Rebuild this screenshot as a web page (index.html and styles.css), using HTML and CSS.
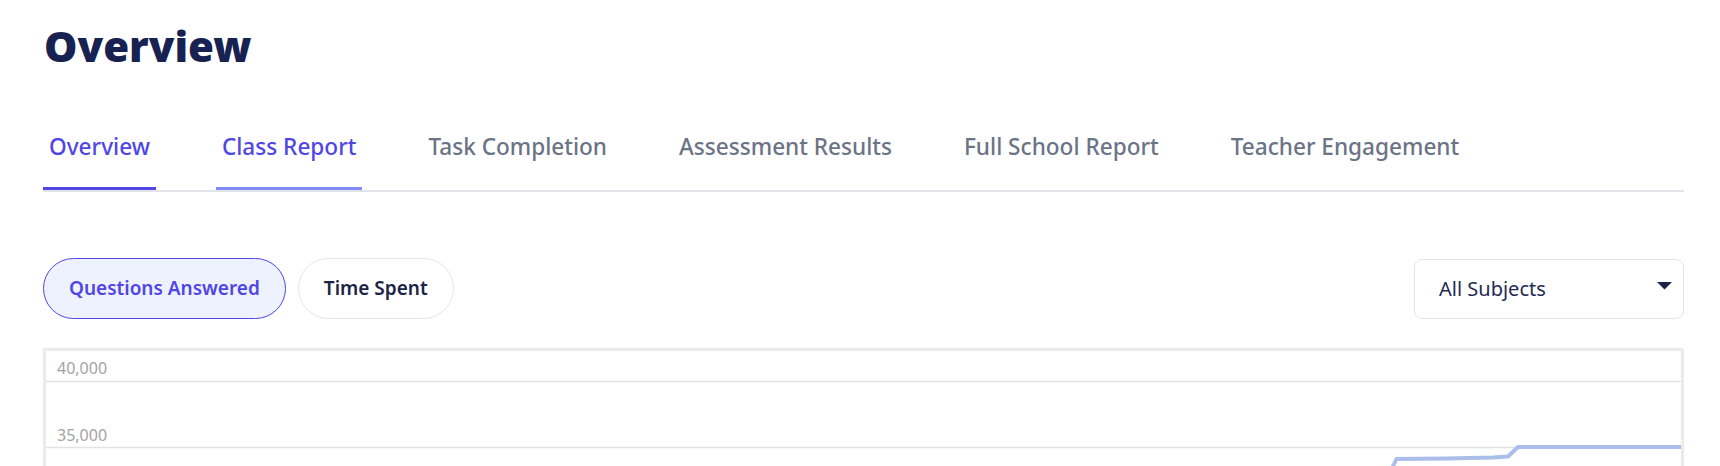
FILE: index.html
```html
<!DOCTYPE html>
<html lang="en">
<head>
<meta charset="utf-8">
<title>Overview</title>
<link rel="stylesheet" href="styles.css">
</head>
<body>
<main class="page">
  <h1 class="title">Overview</h1>

  <nav class="tabs">
    <a class="tab tab-active">Overview</a>
    <a class="tab tab-hover">Class Report</a>
    <a class="tab">Task Completion</a>
    <a class="tab">Assessment Results</a>
    <a class="tab">Full School Report</a>
    <a class="tab">Teacher Engagement</a>
  </nav>

  <div class="toolbar">
    <div class="pills">
      <button class="pill pill-active">Questions Answered</button>
      <button class="pill">Time Spent</button>
    </div>
    <div class="select">
      <span class="select-label">All Subjects</span>
      <svg class="caret" width="15" height="8" viewBox="0 0 15 8"><path d="M0 0 H15 L7.5 7.5 Z" fill="#1b2446"/></svg>
    </div>
  </div>

  <section class="chart">
    <svg class="chart-svg" viewBox="0 0 1635 400" width="1635" height="400">
      <line x1="0" y1="30.5" x2="1635" y2="30.5" class="grid"/>
      <line x1="0" y1="96.5" x2="1635" y2="96.5" class="grid"/>
      <text x="11" y="23" class="axis">40,000</text>
      <text x="11" y="90" class="axis">35,000</text>
      <polyline class="series" points="1338,134 1350.5,108 1400,107.5 1447,106.5 1462,105.5 1472,96 1640,96"/>
    </svg>
  </section>
</main>
</body>
</html>
```

FILE: styles.css
```css
html, body {
  margin: 0;
  padding: 0;
  overflow: hidden;
  background: #ffffff;
}

body {
  font-family: "Noto Sans", "Open Sans", "Liberation Sans", sans-serif;
}

.page {
  padding: 18px 36px 0 43px;
}

.title {
  margin: 0 0 58px 1px;
  font-size: 42px;
  line-height: 56px;
  font-weight: 900;
  color: #172253;
  letter-spacing: 0;
}

.tabs {
  display: flex;
  gap: 60px;
  border-bottom: 2px solid #e1e3e8;
}

.tab {
  display: block;
  padding: 0 6px 25px;
  font-size: 22.6px;
  line-height: 30px;
  font-weight: 500;
  color: #6b7386;
  border-bottom: 3px solid transparent;
  cursor: pointer;
}

.tab-active {
  color: #4f46e5;
  border-bottom-color: #4f46e5;
}

.tab-hover {
  color: #4f46e5;
  border-bottom-color: #818cf8;
}

.toolbar {
  display: flex;
  justify-content: space-between;
  align-items: center;
  margin-top: 66px;
}

.pills {
  display: flex;
  gap: 12px;
}

.pill {
  box-sizing: border-box;
  height: 61px;
  font-family: inherit;
  font-size: 19px;
  line-height: 27px;
  font-weight: 600;
  color: #1b2446;
  background: #ffffff;
  border: 1px solid #e3e5ea;
  border-radius: 999px;
  padding: 0 25px;
  cursor: pointer;
}

.pill-active {
  color: #4f46e5;
  background: #eef2ff;
  border-color: #4f46e5;
}

.select {
  box-sizing: border-box;
  width: 270px;
  height: 60px;
  display: flex;
  align-items: center;
  justify-content: space-between;
  padding: 0 11px 0 24px;
  border: 1px solid #e2e4ea;
  border-radius: 8px;
  background: #ffffff;
}

.select-label {
  font-size: 20px;
  line-height: 27px;
  color: #1f2a55;
}

.caret {
  display: block;
  margin-top: -6px;
}

.chart {
  margin-top: 29px;
  border: 3px solid #ebebeb;
  border-bottom: none;
  height: 400px;
  overflow: hidden;
}

.chart-svg {
  display: block;
  width: 100%;
  height: 400px;
}

.grid {
  stroke: #e2e2e2;
  stroke-width: 1.5;
}

.axis {
  font-family: "Noto Sans", "Open Sans", sans-serif;
  font-size: 16px;
  fill: #a3a3a3;
}

.series {
  fill: none;
  stroke: #a9bfe9;
  stroke-width: 4;
  stroke-linejoin: round;
}
```
